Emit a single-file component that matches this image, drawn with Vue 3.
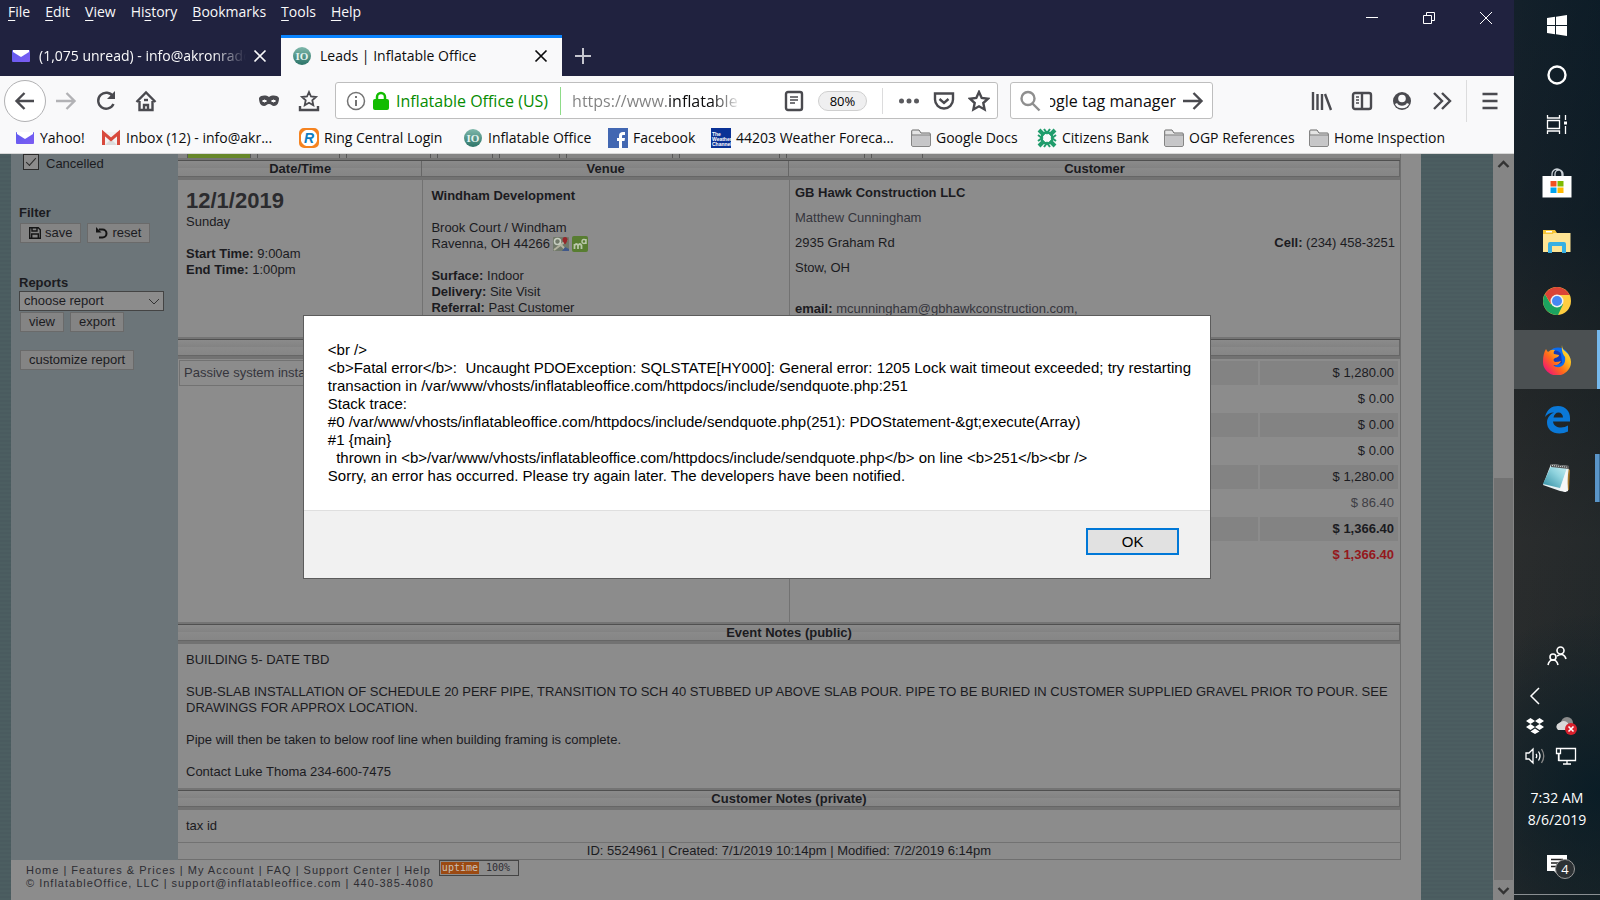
<script setup>
import { ref } from 'vue'

const menu = [
  ['', 'F', 'ile'],
  ['', 'E', 'dit'],
  ['', 'V', 'iew'],
  ['Hi', 's', 'tory'],
  ['', 'B', 'ookmarks'],
  ['', 'T', 'ools'],
  ['', 'H', 'elp'],
]

// badge = text logo, icon = symbol from the sprite
const bookmarks = [
  { icon: 'mail', label: 'Yahoo!' },
  { icon: 'gmail', label: 'Inbox (12) - info@akr...' },
  { badge: 'ring', text: 'R', label: 'Ring Central Login' },
  { badge: 'io', text: 'IO', label: 'Inflatable Office' },
  { icon: 'facebook', label: 'Facebook' },
  { badge: 'weather', text: 'The Weather Channel', label: '44203 Weather Foreca...' },
  { icon: 'folder', label: 'Google Docs' },
  { icon: 'citizens', label: 'Citizens Bank' },
  { icon: 'folder', label: 'OGP References' },
  { icon: 'folder', label: 'Home Inspection' },
]

const leadTabs = [64, 83, 85, 56, 61, 107, 101, 79, 52]

const totals = [
  { value: '$ 1,280.00' },
  { value: '$ 0.00' },
  { value: '$ 0.00' },
  { value: '$ 0.00' },
  { value: '$ 1,280.00' },
  { value: '$ 86.40', type: 'tax' },
  { value: '$ 1,366.40', type: 'total' },
  { value: '$ 1,366.40', type: 'due' },
]

const footerLinks = ['Home', 'Features & Prices', 'My Account', 'FAQ', 'Support Center', 'Help']

const errorText = `<br />
<b>Fatal error</b>:  Uncaught PDOException: SQLSTATE[HY000]: General error: 1205 Lock wait timeout exceeded; try restarting transaction in /var/www/vhosts/inflatableoffice.com/httpdocs/include/sendquote.php:251
Stack trace:
#0 /var/www/vhosts/inflatableoffice.com/httpdocs/include/sendquote.php(251): PDOStatement-&gt;execute(Array)
#1 {main}
  thrown in <b>/var/www/vhosts/inflatableoffice.com/httpdocs/include/sendquote.php</b> on line <b>251</b><br />
Sorry, an error has occurred. Please try again later. The developers have been notified.`

const url = ref('https://www.inflatable')
const search = ref('google tag manager')
const report = ref('choose report')
const cancelled = ref(true)
const dialogOpen = ref(true)
</script>

<template>
  <!-- shared icons -->
  <svg class="sprite" aria-hidden="true">
    <defs>
      <linearGradient id="gMail" x1="0" y1="0" x2="1" y2="1">
        <stop offset="0" stop-color="#5d5bf0" /><stop offset="1" stop-color="#7d5df2" />
      </linearGradient>
      <linearGradient id="gFox" x1="1" y1="0" x2="0.1" y2="0.9">
        <stop offset="0" stop-color="#fff14d" /><stop offset="0.35" stop-color="#ffbd1e" />
        <stop offset="0.65" stop-color="#ff6a1a" /><stop offset="1" stop-color="#f0107a" />
      </linearGradient>
      <linearGradient id="gPad" x1="0" y1="1" x2="1" y2="0">
        <stop offset="0" stop-color="#2e8ba0" /><stop offset="0.6" stop-color="#8fd3de" /><stop offset="1" stop-color="#c8eef2" />
      </linearGradient>
    </defs>
    <symbol id="mail" viewBox="0 0 20 20">
      <rect x="1" y="4" width="18" height="12" rx="1" fill="url(#gMail)" />
      <path d="M2 4h16v2l-8 5-8-5z" fill="#fff" />
    </symbol>
    <symbol id="gmail" viewBox="0 0 20 20">
      <path d="M1 4h18v13H1z" fill="#f2f2f2" />
      <path d="M4 17l6-6 6 6z" fill="#dcdcdc" />
      <path d="M2.500 17V5l7.500 6.500L17.500 5v12" fill="none" stroke="#d84a3d" stroke-width="3" />
    </symbol>
    <symbol id="facebook" viewBox="0 0 20 20">
      <rect width="20" height="20" fill="#4267b2" />
      <path d="M11 20v-7H9v-3h2V8c0-3 1.500-4 4-4h2v3h-1.500C14 7 14 7.500 14 8.500V10h3l-.5 3H14v7z" fill="#fff" />
    </symbol>
    <symbol id="folder" viewBox="0 0 20 20">
      <path d="M.7 17.300V3q0-1 1-1H8l2 3h8.300q1 0 1 1v11.300q0 1-1 1H1.700q-1 0-1-1z" fill="#e4e4e4" stroke="#6b6b6b" />
      <path d="M1.500 7.500h17v10h-17z" fill="#c6c6c8" /><path d="M1 7h18" stroke="#777" />
    </symbol>
    <symbol id="citizens" viewBox="0 0 20 20">
      <g stroke="#1f9c6b" fill="none">
        <path d="M2 2l5 5M18 2l-5 5M2 18l5-5M18 18l-5-5" stroke-width="4" />
        <path d="M7 1l3 4 3-4M7 19l3-4 3 4M1 7l4 3-4 3M19 7l-4 3 4 3" stroke-width="2" />
        <circle cx="10" cy="10" r="5.500" stroke-width="2.400" />
      </g>
    </symbol>
    <symbol id="close" viewBox="0 0 16 16">
      <path d="M2.500 2.500l11 11M13.500 2.500l-11 11" fill="none" stroke="currentColor" stroke-width="1.700" />
    </symbol>
  </svg>

  <div class="desktop">
    <div class="browser">
      <header class="titlebar">
        <nav class="menu">
          <button v-for="m in menu" :key="m.join('')">{{ m[0] }}<u>{{ m[1] }}</u>{{ m[2] }}</button>
        </nav>
        <div class="window-buttons">
          <button aria-label="Minimize"><svg width="14" height="14"><path d="M1 6.500h12" stroke="#fff" /></svg></button>
          <button aria-label="Restore"><svg width="14" height="14" fill="none" stroke="#fff"><path d="M1.500 4.500h8v8h-8zM4.500 4V1.500h8v8H10" /></svg></button>
          <button aria-label="Close"><svg width="14" height="14"><path d="M1 1l12 12M13 1L1 13" stroke="#fff" /></svg></button>
        </div>
      </header>

      <div class="tabs">
        <div class="tab">
          <svg class="favicon"><use href="#mail" /></svg>
          <span class="tab-title faded">(1,075 unread) - info@akronradon</span>
          <button aria-label="Close tab"><svg width="16" height="16"><use href="#close" /></svg></button>
        </div>
        <div class="tab active">
          <span class="favicon badge io">IO</span>
          <span class="tab-title">Leads | Inflatable Office</span>
          <button aria-label="Close tab"><svg width="16" height="16"><use href="#close" /></svg></button>
        </div>
        <button class="new-tab" aria-label="New tab"><svg width="18" height="18"><path d="M9 1v16M1 9h16" stroke="#c6c6cf" stroke-width="2" /></svg></button>
      </div>

      <div class="navbar">
        <button class="back" aria-label="Back">
          <svg width="22" height="22" viewBox="0 0 22 22"><path d="M20 11H3M10.500 3L2.500 11l8 8" /></svg>
        </button>
        <button class="tool dim" aria-label="Forward">
          <svg width="22" height="22" viewBox="0 0 22 22"><path d="M1 11h18M11.500 3l8 8-8 8" /></svg>
        </button>
        <button class="tool" aria-label="Reload">
          <svg width="22" height="22" viewBox="0 0 22 22"><path d="M18 6.500A8 8 0 1 0 18.500 14" /><path d="M20 1v8h-8z" fill="#4a4a4f" stroke="none" /></svg>
        </button>
        <button class="tool" aria-label="Home">
          <svg width="22" height="22" viewBox="0 0 22 22"><path d="M1.500 12L11 2.500l9.500 9.500M4.500 11v9h13v-9M9 20v-5h4v5" /><path d="M9 10h4" /></svg>
        </button>
        <span class="spacer"></span>
        <button class="tool" aria-label="Private browsing">
          <svg width="22" height="22" viewBox="0 0 22 22"><path d="M1 8c2-3 7-3 10-1 3-2 8-2 10 1 0 5-2 8-5 8-2 0-3-2-5-2s-3 2-5 2c-3 0-5-3-5-8z" fill="#4a4a4f" stroke="none" /><path d="M4.500 11q2-2 4 0-2 2-4 0zM13.500 11q2-2 4 0-2 2-4 0z" fill="#fff" stroke="#fff" stroke-width="1" /></svg>
        </button>
        <button class="tool" aria-label="Bookmarks tray">
          <svg width="22" height="22" viewBox="0 0 22 22"><path d="M11 2l2 4.500 5 .5-3.700 3.300 1 5L11 12.800l-4.300 2.500 1-5L4 7l5-.5z" stroke-width="1.800" /><path d="M2 16v4h18v-4" /></svg>
        </button>

        <div class="urlbar">
          <svg class="info" width="20" height="20" viewBox="0 0 20 20"><circle cx="10" cy="10" r="8.500" fill="none" stroke="#737373" stroke-width="1.500" /><path d="M10 5v2M10 9v6" stroke="#737373" stroke-width="2" /></svg>
          <svg class="lock" width="18" height="20" viewBox="0 0 18 20"><rect x="1" y="8" width="16" height="11" rx="2" fill="#12bc00" /><path d="M5 9V6a4 4 0 0 1 8 0v3" fill="none" stroke="#12bc00" stroke-width="2.500" /></svg>
          <span class="identity">Inflatable Office (US)</span>
          <input v-model="url" class="address" aria-label="Address">
          <button aria-label="Reader view"><svg width="22" height="22" viewBox="0 0 22 22"><rect x="3" y="2" width="16" height="18" rx="2" /><path d="M7 7h8M7 10h8M7 13h5" stroke-width="1.300" /></svg></button>
          <button class="zoom">80%</button>
          <span class="line"></span>
          <button aria-label="Page actions"><svg width="22" height="22" viewBox="0 0 22 22"><g fill="#5a5a5e" stroke="none"><circle cx="3.500" cy="11" r="2.500" /><circle cx="11" cy="11" r="2.500" /><circle cx="18.500" cy="11" r="2.500" /></g></svg></button>
          <button aria-label="Save to Pocket"><svg width="22" height="22" viewBox="0 0 22 22"><path d="M2 3.500h18v6a9 9 0 0 1-18 0z" /><path d="M6.500 9l4.500 4 4.500-4" stroke-width="2.400" /></svg></button>
          <button aria-label="Bookmark this page"><svg width="22" height="22" viewBox="0 0 22 22"><path d="M11 2l2.700 6 6.300.7-4.700 4.300 1.300 6.500L11 16.300l-5.600 3.200L6.700 13 2 8.700 8.300 8z" /></svg></button>
        </div>

        <div class="searchbar">
          <svg class="glass" width="22" height="22" viewBox="0 0 22 22"><circle cx="9" cy="8.500" r="6.500" /><path d="M13.500 13.500l7 7" /></svg>
          <input v-model="search" aria-label="Search">
          <button aria-label="Go"><svg width="22" height="22" viewBox="0 0 22 22"><path d="M1 11h18M11.500 3l8 8-8 8" /></svg></button>
        </div>
        <span class="spacer wide"></span>

        <button class="tool" aria-label="Library"><svg width="22" height="22" viewBox="0 0 22 22"><path d="M2 2v18M6.500 4v16M11 4v16M14 4l6 16" /></svg></button>
        <button class="tool" aria-label="Sidebars"><svg width="22" height="22" viewBox="0 0 22 22"><rect x="2" y="3" width="18" height="16" rx="2" /><path d="M11 3v16" /><path d="M5 7h3M5 10h3M5 13h3" stroke-width="1.300" /></svg></button>
        <button class="tool" aria-label="Account"><svg width="22" height="22" viewBox="0 0 22 22"><circle cx="11" cy="11" r="9" fill="#4a4a4f" stroke="none" /><circle cx="11" cy="8.500" r="3.800" fill="#f9f9fa" stroke="none" /><path d="M5 13.500q1.500 3.500 6 3.500t6-3.500" stroke="#f9f9fa" /></svg></button>
        <button class="tool" aria-label="More tools"><svg width="22" height="22" viewBox="0 0 22 22"><path d="M3 3l8 8-8 8M11 3l8 8-8 8" /></svg></button>
        <button class="tool hamburger" aria-label="Menu"><svg width="22" height="22" viewBox="0 0 22 22"><path d="M3.500 4h15M3.500 11h15M3.500 18h15" /></svg></button>
      </div>

      <nav class="bookmarks">
        <a v-for="b in bookmarks" :key="b.label" href="#">
          <svg v-if="b.icon" class="bm-icon"><use :href="'#' + b.icon" /></svg>
          <span v-else class="bm-icon badge" :class="b.badge">{{ b.text }}</span>
          {{ b.label }}
        </a>
      </nav>

      <main class="page">
        <div class="site">
          <div class="columns">
            <aside class="sidebar">
              <label class="check"><input v-model="cancelled" type="checkbox"><span>Cancelled</span></label>
              <section class="filter">
                <h3>Filter</h3>
                <div class="row">
                  <button class="btn">
                    <svg width="12" height="12" viewBox="0 0 12 12"><path d="M.7.7h8.600l2 2v8.600H.7zM3 1v3h5V1M2.700 11V7h6.600v4" fill="none" stroke="#151515" stroke-width="1.400" /></svg>
                    save
                  </button>
                  <button class="btn">
                    <svg width="12" height="12" viewBox="0 0 12 12"><path d="M3 10.500h3.500a4 4 0 0 0 0-8H3" fill="none" stroke="#151515" stroke-width="2" /><path d="M0 0v5.500h5.500z" fill="#151515" /></svg>
                    reset
                  </button>
                </div>
              </section>
              <section class="reports">
                <h3><label for="report">Reports</label></h3>
                <div class="select">
                  <select id="report" v-model="report"><option>choose report</option></select>
                  <svg width="12" height="8"><path d="M1 1l5 5 5-5" fill="none" stroke="#333" /></svg>
                </div>
                <div class="row">
                  <button class="btn">view</button>
                  <button class="btn">export</button>
                </div>
                <button class="btn customize">customize report</button>
              </section>
            </aside>

            <article class="lead">
              <div class="lead-tabs">
                <i v-for="(w, i) in leadTabs" :key="i" :class="{ current: i === 0 }" :style="{ width: w + 'px' }"></i>
              </div>
              <div class="grid3 bars">
                <h2>Date/Time</h2>
                <h2>Venue</h2>
                <h2>Customer</h2>
              </div>
              <div class="grid3 details">
                <div class="cell">
                  <strong class="date">12/1/2019</strong>
                  <p>Sunday</p>
                  <p class="gap"><b>Start Time:</b> 9:00am</p>
                  <p><b>End Time:</b> 1:00pm</p>
                </div>
                <div class="cell">
                  <p><b>Windham Development</b></p>
                  <p class="gap">Brook Court / Windham</p>
                  <p class="city">Ravenna, OH 44266
                    <svg width="16" height="14" viewBox="0 0 16 14"><rect width="16" height="14" rx="1" fill="#71796a" /><path d="M1 13L14 3M6 6l8 8" stroke="#b3b3a0" stroke-width="2" /><path d="M9 14l3-4 4 2v2z" fill="#40588a" /><circle cx="4.500" cy="4.500" r="3" fill="none" stroke="#c5cdc0" stroke-width="1.500" /><path d="M9.500 2.500a2.500 2.500 0 0 1 5 0c0 2-2.500 5-2.500 5S9.500 4.500 9.500 2.500z" fill="#96262a" /></svg>
                    <svg width="16" height="16" viewBox="0 0 16 16"><rect width="16" height="16" rx="2" fill="#587d31" /><path d="M2.500 13V8M2.500 9.500q2-3 3.500 0V13M6 9.500q2-3 3.500 0V13" fill="none" stroke="#b9c6aa" stroke-width="1.800" /><path d="M14 3v5M14 5.500a2 2 0 1 1 0-.1" fill="none" stroke="#b9c6aa" stroke-width="1.500" /></svg>
                  </p>
                  <p class="gap"><b>Surface:</b> Indoor</p>
                  <p><b>Delivery:</b> Site Visit</p>
                  <p><b>Referral:</b> Past Customer</p>
                </div>
                <div class="cell customer">
                  <p><b>GB Hawk Construction LLC</b></p>
                  <p><a href="#">Matthew Cunningham</a></p>
                  <p class="split"><span>2935 Graham Rd</span><span><b>Cell:</b> (234) 458-3251</span></p>
                  <p>Stow, OH</p>
                  <p class="gap"><b>email:</b> <a href="#">mcunningham@gbhawkconstruction.com,</a></p>
                </div>
              </div>

              <div class="bars"><h2></h2></div>
              <div class="items">
                <div class="cell-items"><div class="item-name">Passive system installation</div></div>
                <div class="cell-totals">
                  <table>
                    <tbody>
                      <tr v-for="(t, i) in totals" :key="i" :class="t.type">
                        <td></td>
                        <td>{{ t.value }}</td>
                      </tr>
                    </tbody>
                  </table>
                </div>
              </div>

              <div class="bars"><h2>Event Notes (public)</h2></div>
              <div class="notes">
                <p>BUILDING 5- DATE TBD</p>
                <p>SUB-SLAB INSTALLATION OF SCHEDULE 20 PERF PIPE, TRANSITION TO SCH 40 STUBBED UP ABOVE SLAB POUR. PIPE TO BE BURIED IN CUSTOMER SUPPLIED GRAVEL PRIOR TO POUR. SEE DRAWINGS FOR APPROX LOCATION.</p>
                <p>Pipe will then be taken to below roof line when building framing is complete.</p>
                <p>Contact Luke Thoma 234-600-7475</p>
              </div>

              <div class="bars"><h2>Customer Notes (private)</h2></div>
              <div class="private">tax id</div>
              <div class="meta">ID: 5524961 | Created: 7/1/2019 10:14pm | Modified: 7/2/2019 6:14pm</div>
            </article>
          </div>

          <footer class="footer">
            <div>
              <p><template v-for="(l, i) in footerLinks" :key="l"><template v-if="i"> | </template><a href="#">{{ l }}</a></template></p>
              <p>© InflatableOffice, LLC | <a href="#">support@inflatableoffice.com</a> | 440-385-4080</p>
            </div>
            <div class="uptime"><span>uptime</span><b>100%</b></div>
          </footer>
        </div>

        <div class="scrollbar">
          <svg width="20" height="20"><path d="M5.500 13l5-5 5 5" /></svg>
          <div class="track"><div class="thumb"></div></div>
          <svg width="20" height="20"><path d="M5.500 8l5 5 5-5" /></svg>
        </div>

        <div v-if="dialogOpen" class="overlay">
          <div class="dialog" role="alertdialog" aria-modal="true">
            <p>{{ errorText }}</p>
            <div class="dialog-footer"><button @click="dialogOpen = false">OK</button></div>
          </div>
        </div>
      </main>
    </div>

    <aside class="taskbar">
      <button class="sys" aria-label="Start"><svg width="24" height="24" viewBox="0 0 24 24"><path d="M2 5l8-1.200V12H2zM11 3.700L22 2v10H11zM2 13h8v8.200L2 20zM11 13h11v10l-11-1.700z" fill="#fff" /></svg></button>
      <button class="sys" aria-label="Cortana"><svg width="24" height="24" viewBox="0 0 24 24"><circle cx="12" cy="12" r="8.500" fill="none" stroke="#fff" stroke-width="2.400" /></svg></button>
      <button class="sys" aria-label="Task view"><svg width="24" height="24" viewBox="0 0 24 24" fill="none" stroke="#fff" stroke-width="1.300"><path d="M2.500 7.500h12v8h-12zM2.500 2v3h12V2M2.500 21v-3h12v3M20.500 2v5M20.500 13v8" /><path d="M19 8.500h3v3h-3z" fill="#fff" stroke="none" /></svg></button>

      <button class="app" aria-label="Store"><svg width="30" height="30" viewBox="0 0 30 30"><path d="M10 9V6a5 5 0 0 1 10 0v3M13 9V6a4 4 0 0 1 8 0v3" fill="none" stroke="#c9d0d6" stroke-width="1.300" /><path d="M.5 8h29v21.500H.5z" fill="#fff" /><path d="M8.500 13h6v5.500h-6z" fill="#f25022" /><path d="M15.500 13h6v5.500h-6z" fill="#7fba00" /><path d="M8.500 19.500h6V25h-6z" fill="#00a4ef" /><path d="M15.500 19.500h6V25h-6z" fill="#ffb900" /></svg></button>
      <button class="app" aria-label="File Explorer"><svg width="30" height="30" viewBox="0 0 30 30"><path d="M1 3h12l2 3h-3v3H1z" fill="#f7c536" /><path d="M1 6h27.500v19H1z" fill="#ffe594" /><path d="M1 3h11l2 2h-2l-1 2H1z" fill="#f7c536" /><path d="M4 4h6v1.500H4z" fill="#fff" /><path d="M6 26v-9q0-2 2-2h14q2 0 2 2v9h-4v-7H10v7z" fill="#38b0e3" /></svg></button>
      <button class="app" aria-label="Chrome"><svg width="30" height="30" viewBox="0 0 30 30"><circle cx="15" cy="15" r="14" fill="#ffcd40" /><path d="M15 15L15 29A14 14 0 0 1 2.900 8L8.900 18.500z" fill="#1ba260" /><path d="M15 29A14 14 0 0 0 16 29L21 18.500 15 15z" fill="#1ba260" /><path d="M2.900 8A14 14 0 0 1 27.100 8L27.500 9H15L9 18z" fill="#db4437" /><circle cx="15" cy="15" r="6.500" fill="#f1f1f1" /><circle cx="15" cy="15" r="5" fill="#4687f4" /></svg></button>
      <button class="app active" aria-label="Firefox"><svg width="30" height="30" viewBox="0 0 30 30"><circle cx="16" cy="14" r="11.500" fill="#0a6cf0" /><path d="M10 6q6-2 9 3l1 9-8 3z" fill="#173bb5" /><path d="M20 0q0 4 3 6 6 5 6 11a14 13.500 0 0 1-28 0C1 11 2 7 4 4q1 2 2 3 3-3 7-2-2 2-1 4l5 1q0 2-4 3-3 2 0 4 4 0 6-1-2 5-8 4 4 4 9 1 4-3 3-9-4-5-3-12z" fill="url(#gFox)" /></svg></button>
      <button class="app" aria-label="Edge"><svg width="30" height="30" viewBox="0 0 30 30"><path d="M3 13C5 5 10 2 16 2c8 0 12 6 12 12v3.500H11c.5 4 4 6 8 6q4 0 7-2v6q-4 2-8.500 2C10 29.500 5 25 5 18.500 5 14 8 10 12 8.500 8 8.500 5 10.500 3 13zm8.500.5H21c0-3-2-5-4.500-5s-4.500 2-5 5z" fill="#0a78d7" /></svg></button>
      <button class="app running" aria-label="Notepad"><svg width="30" height="30" viewBox="0 0 30 30"><path d="M25 5l3 2-1 20-4 1z" fill="#a5762c" /><path d="M9 1l18 2-3 26-6-1L1 22z" fill="#e8f1f3" /><path d="M9 3l16 2-7 20-17-4z" fill="url(#gPad)" /><path d="M25 5l1 23-3 1-5-2z" fill="#f7f7f7" /><path d="M9 1l18 2v3L9 4z" fill="#555" /><path d="M10 2.500l16 1.800" stroke="#ddd" stroke-dasharray="1 1" /></svg></button>

      <div class="tray">
        <button class="people" aria-label="People"><svg width="20" height="20" viewBox="0 0 20 20" fill="none" stroke="#fff" stroke-width="1.600"><circle cx="13.500" cy="4.500" r="3.500" /><path d="M10 10q7-4 9 3" /><circle cx="6" cy="11" r="3" /><path d="M1 19q1-5 5-5t5 5" /></svg></button>
        <div class="tray-icons">
          <svg width="20" height="20" viewBox="0 0 20 20"><path d="M14 2l-8 8 8 8" fill="none" stroke="#fff" stroke-width="1.500" /></svg>
          <span></span>
          <svg width="20" height="20" viewBox="0 0 20 20"><path d="M5.500 2l4.500 3-4.500 3L1 5zM14.500 2L19 5l-4.500 3L10 5zM5.500 8l4.500 3-4.500 3L1 11zM14.500 8l4.500 3-4.500 3-4.500-3zM10 12.500l4.500 3L10 18l-4.500-2.500z" fill="#fff" /></svg>
          <svg width="22" height="20" viewBox="0 0 22 20"><circle cx="12" cy="7" r="6" fill="#8b8b8b" /><path d="M3 14a4 4 0 0 1 1-7q5-4 9 0v7z" fill="#d9d9d9" /><circle cx="16" cy="13" r="6" fill="#d8202c" /><path d="M13.500 10.500l5 5M18.500 10.500l-5 5" stroke="#fff" stroke-width="1.600" /></svg>
          <svg width="20" height="20" viewBox="0 0 20 20" fill="none" stroke="#fff" stroke-width="1.300"><path d="M1 7h3l4-4v14l-4-4H1zM11 8q1.500 2 0 4M13.500 5.500q3 4.500 0 9" /><path d="M16.500 3q4.500 7 0 14" stroke="#888" /></svg>
          <svg width="22" height="20" viewBox="0 0 22 20" fill="none" stroke="#fff" stroke-width="1.300"><path d="M5 2.500h15.500v12H4V8M12 15v3M8 18h8M1.500 2.500h4v5h-4zM3.500 8v7" /></svg>
        </div>
        <div class="clock"><span>7:32 AM</span><span>8/6/2019</span></div>
        <button class="notify" aria-label="Notifications">
          <svg width="22" height="22" viewBox="0 0 22 22"><path d="M1 1h20v16h-9v4l-4-4H1z" fill="#fff" /><path d="M5 5.500h12M5 9h12M5 12.500h8" stroke="#222" stroke-width="1.300" /></svg>
          <span class="count">4</span>
        </button>
      </div>
    </aside>
  </div>
</template>

<style>
body {
  margin: 0;
  overflow: hidden;
}
</style>

<style scoped>
.sprite {
  position: absolute;
  width: 0;
  height: 0;
}

.desktop {
  display: grid;
  grid-template-columns: minmax(0, 1fr) 86px;
  height: 100vh;
  font-family: "Open Sans", "Noto Sans", sans-serif;
}

button {
  padding: 0;
  border: 0;
  background: none;
  font: inherit;
  color: inherit;
}

svg {
  display: block;
  flex: none;
}

p, h2, h3 {
  margin: 0;
}

a {
  color: inherit;
  text-decoration: none;
}

.browser {
  display: flex;
  flex-direction: column;
  min-height: 0;
}

/* title bar and tabs */
.titlebar {
  display: flex;
  justify-content: space-between;
  height: 35px;
  background: #20223f;
  color: #f9f9fa;
}

.menu {
  display: flex;
  gap: 15px;
  padding-left: 8px;
  font-size: 14px;
  line-height: 24px;
  height: 24px;
}

.menu u {
  text-underline-offset: 3px;
}

.window-buttons {
  display: flex;
}

.window-buttons button {
  display: grid;
  place-items: center;
  width: 57px;
}

.tabs {
  display: flex;
  height: 41px;
  background: #20223f;
  color: #f9f9fa;
}

.tab {
  box-sizing: border-box;
  display: flex;
  align-items: center;
  width: 281px;
  padding: 0 13px 0 11px;
  font-size: 14px;
}

.tab.active {
  padding-bottom: 3px;
  border-top: 3px solid #0a84ff;
  background: #f9f9fa;
  color: #0c0c0d;
}

.favicon {
  width: 20px;
  height: 20px;
  margin-right: 8px;
}

.tab-title {
  flex: 1;
  overflow: hidden;
  white-space: nowrap;
  margin-right: 6px;
}

.tab-title.faded {
  -webkit-mask-image: linear-gradient(90deg, #000 84%, transparent);
  mask-image: linear-gradient(90deg, #000 84%, transparent);
}

.new-tab {
  width: 42px;
  display: grid;
  place-items: center;
}

/* text logos */
.badge {
  box-sizing: border-box;
  display: block;
  flex: none;
  text-align: center;
  white-space: normal;
}

.badge.io {
  border: 1px solid transparent;
  border-radius: 50%;
  background: linear-gradient(#7fb8ab, #2c7468) padding-box;
  color: #e4f3ef;
  font: bold 11px/18px "Liberation Serif", serif;
}

.badge.ring {
  border: 2px solid #f58320;
  border-radius: 5px;
  background: radial-gradient(circle, #fff 8px, #f58320 9px);
  color: #0d7dc1;
  font: italic bold 14px/16px "Liberation Sans", sans-serif;
}

.badge.weather {
  padding: 4px 0 0 1px;
  background: #0b3296;
  color: #fff;
  font: bold 5px/5px "Liberation Sans", sans-serif;
  text-align: left;
}

/* navigation */
.navbar {
  display: flex;
  align-items: center;
  height: 49px;
  padding: 0 4px;
  background: #f9f9fa;
}

.navbar svg {
  fill: none;
  stroke: #4a4a4f;
  stroke-width: 2.4;
}

.back {
  display: grid;
  place-items: center;
  width: 42px;
  height: 42px;
  border: 1px solid #b1b1b3;
  border-radius: 50%;
  background: #fff;
}

.tool {
  display: grid;
  place-items: center;
  width: 40px;
  height: 40px;
}

.tool.dim {
  opacity: 0.4;
}

.spacer {
  width: 83px;
}

.spacer.wide {
  width: 89px;
}

.hamburger {
  position: relative;
  margin-left: 8px;
}

.hamburger::before {
  content: "";
  position: absolute;
  left: -4px;
  top: -1px;
  height: 42px;
  border-left: 1px solid #dcdcdd;
}

.urlbar,
.searchbar {
  box-sizing: border-box;
  display: flex;
  align-items: center;
  height: 37px;
  border: 1px solid #bebebe;
  border-radius: 3px;
  background: #fff;
}

.urlbar {
  flex: 1;
  min-width: 0;
  margin: 0 12px 0 6px;
  padding: 0 1px 0 10px;
}

.urlbar > button:not(.zoom) {
  display: grid;
  place-items: center;
  width: 35px;
}

.navbar svg.info,
.navbar svg.lock {
  stroke: none;
}

.info {
  margin-right: 6px;
}

.identity {
  margin-left: 6px;
  padding-right: 12px;
  border-right: 1px solid #8edc88;
  font-size: 16px;
  line-height: 28px;
  color: #058b00;
  white-space: nowrap;
}

.address,
.searchbar input {
  min-width: 0;
  padding: 0;
  border: 0;
  outline: 0;
  background: none;
  font: 16px/28px "Open Sans", "Noto Sans", sans-serif;
}

.address {
  flex: 0 1 168px;
  margin: 0 auto 0 11px;
  background: linear-gradient(90deg, #808080 96px, #0c0c0d 96px, #0c0c0d 140px, transparent 168px);
  -webkit-background-clip: text;
  background-clip: text;
  color: transparent;
}

.zoom {
  width: 49px;
  height: 20px;
  margin: 0 15px 0 7px;
  border: 1px solid #cfcfcf;
  border-radius: 10px;
  background: #efeff0;
  font-size: 13px;
  line-height: 18px;
}

.line {
  height: 26px;
  margin-right: 8px;
  border-left: 1px solid #dcdcdd;
}

.searchbar {
  width: 203px;
  padding: 0 8px;
}

.navbar svg.glass {
  stroke: #8f8f8f;
}

.searchbar input {
  flex: 1;
  margin: 0 6px 0 9px;
  color: #0c0c0d;
  direction: rtl;
}

.bookmarks {
  display: grid;
  grid-template-columns: 86px 198px 164px 145px 103px 200px 126px 127px 145px auto;
  height: 28px;
  padding-left: 15px;
  border-bottom: 1px solid #d8d8d8;
  background: #f9f9fa;
  font-size: 14px;
  line-height: 26px;
}

.bookmarks a {
  display: flex;
  align-items: center;
  gap: 5px;
  height: 26px;
  white-space: nowrap;
  color: #0c0c0d;
}

.bm-icon {
  width: 20px;
  height: 20px;
}

/* web page */
.page {
  position: relative;
  display: flex;
  flex: 1;
  min-height: 0;
  overflow: hidden;
  background: repeating-linear-gradient(#4c5e61 0 2px, #4a5b5f 2px 4px);
  font: 13px/16px "Liberation Sans", Arial, sans-serif;
  color: #1b1b1f;
}

.site {
  flex: 1;
  display: flex;
  flex-direction: column;
  margin: 0 72px 0 11px;
  background: #8c8c8c;
}

.columns {
  display: grid;
  grid-template-columns: 167px minmax(0, 1fr);
}

.sidebar {
  padding: 0 8px;
  background: #6c7579;
}

.check {
  display: flex;
  align-items: flex-end;
  gap: 7px;
  height: 18px;
  padding-left: 4px;
}

.check input {
  appearance: none;
  flex: none;
  box-sizing: border-box;
  width: 16px;
  height: 16px;
  margin: 0 0 2px;
  border: 1px solid #2b2b2b;
  background: #8c8c8c;
  display: grid;
  place-items: center;
}

.check input:checked::before {
  content: "";
  width: 9px;
  height: 4px;
  margin-top: -4px;
  border: solid #2b2b2b;
  border-width: 0 0 1px 1px;
  transform: rotate(-48deg);
}

.sidebar h3 {
  font-size: 13px;
  line-height: 20px;
}

.filter {
  margin-top: 31px;
}

.reports {
  margin-top: 32px;
}

.reports h3 {
  line-height: 16px;
}

.row {
  display: flex;
  gap: 6px;
  padding-left: 1px;
}

.btn {
  display: inline-flex;
  align-items: center;
  gap: 4px;
  height: 20px;
  padding: 0 8px;
  border: 1px solid #6a6a6a;
  background: #848484;
  line-height: 18px;
}

.select {
  position: relative;
  width: 145px;
  margin-bottom: 1px;
}

.select select {
  appearance: none;
  width: 100%;
  height: 20px;
  padding: 0 4px;
  border: 1px solid #444;
  border-radius: 0;
  background: #8c8c8c;
  font: inherit;
  color: #1b1b1f;
}

.select svg {
  position: absolute;
  right: 4px;
  top: 7px;
}

.customize {
  margin: 18px 0 0 1px;
}

.lead {
  margin-right: 20px;
  border-right: 1px solid #6f6f6f;
  border-bottom: 1px solid #6f6f6f;
}

.lead-tabs {
  display: flex;
  gap: 6px;
  height: 4px;
  padding-left: 9px;
  background: #858585;
}

.lead-tabs i {
  box-sizing: border-box;
  border: solid #585858;
  border-width: 0 1px;
}

.lead-tabs .current {
  background: #67872a;
}

.bars h2 {
  box-sizing: border-box;
  height: 22px;
  border-top: 2px solid #747474;
  border-bottom: 3px solid #727272;
  background: linear-gradient(#8c8c8c, #838383 45%, #8a8a8a 50%, #858585);
  box-shadow: inset 0 1px #505050, inset 0 -1px #666, inset -1px 0 #666;
  font-size: 13px;
  line-height: 18px;
  text-align: center;
}

.grid3 {
  display: grid;
  grid-template-columns: 20% 30% 50%;
}

.details {
  height: 157px;
}

.cell {
  padding: 8px;
  border-left: 1px solid #727272;
}

.cell:first-child {
  border-left: 0;
}

.gap {
  margin-top: 16px;
}

.date {
  display: block;
  font-size: 22px;
  line-height: 26px;
  color: #2b2b2e;
}

.city {
  display: flex;
  align-items: center;
  gap: 3px;
}

.customer {
  padding: 0 5px;
  line-height: 25px;
}

.customer a {
  color: #35353c;
}

.split {
  display: flex;
  justify-content: space-between;
}

.items {
  display: grid;
  grid-template-columns: 50% 50%;
  height: 263px;
}

.cell-items {
  padding: 1px;
}

.item-name {
  box-sizing: border-box;
  height: 26px;
  padding: 0 4px;
  border: 1px solid #727272;
  line-height: 24px;
  color: #35353c;
}

.cell-totals {
  border-left: 1px solid #727272;
}

.cell-totals table {
  width: 100%;
  border-spacing: 2px;
}

.cell-totals td {
  height: 24px;
  padding: 0 4px;
  text-align: right;
}

.cell-totals td:last-child {
  width: 130px;
}

.cell-totals tr:nth-child(odd) td {
  background: #838383;
}

.tax {
  color: #3e3e44;
}

.total {
  font-weight: bold;
}

.due {
  font-weight: bold;
  color: #94181c;
}

.notes {
  display: flex;
  flex-direction: column;
  gap: 16px;
  padding: 8px;
}

.private {
  padding: 8px;
}

.meta {
  border-top: 1px solid #727272;
  text-align: center;
}

.footer {
  display: flex;
  gap: 5px;
  padding-left: 15px;
  font-size: 11px;
  line-height: 13px;
  letter-spacing: 1px;
  color: #2d2d33;
}

.footer > div:first-child {
  padding-top: 4px;
}

.uptime {
  box-sizing: border-box;
  display: flex;
  width: 80px;
  height: 16px;
  padding: 1px;
  border: 1px solid #444;
  font: 10px/12px "DejaVu Sans Mono", monospace;
  letter-spacing: normal;
}

.uptime span {
  width: 38px;
  background: #9c4a12;
  color: #c9c0b8;
  text-align: center;
}

.uptime b {
  flex: 1;
  font-weight: normal;
  text-align: center;
}

.scrollbar {
  display: flex;
  flex-direction: column;
  width: 21px;
  background: #858585;
}

.scrollbar path {
  fill: none;
  stroke: #333;
  stroke-width: 2.4;
}

.track {
  display: flex;
  flex: 1;
  align-items: flex-end;
  padding: 0 1px;
}

.thumb {
  flex: 1;
  height: 57%;
  background: #727272;
}

/* error dialog */
.overlay {
  position: absolute;
  inset: 0;
  display: flex;
  align-items: flex-start;
  justify-content: center;
}

.dialog {
  box-sizing: border-box;
  width: 60%;
  margin-top: 161px;
  border: 1px solid #5c5c5c;
  background: #fff;
  color: #000;
}

.dialog p {
  padding: 25px 12px 25px 24px;
  font-size: 15px;
  line-height: 18px;
  white-space: pre-wrap;
}

.dialog-footer {
  display: flex;
  justify-content: flex-end;
  padding: 17px 31px 23px;
  border-top: 1px solid #dfdfdf;
  background: #f1f1f1;
}

.dialog-footer button {
  box-sizing: border-box;
  width: 93px;
  height: 27px;
  border: 2px solid #0078d7;
  background: #e1e1e1;
  font-size: 15px;
}

/* taskbar */
.taskbar {
  display: flex;
  flex-direction: column;
  background:
    radial-gradient(circle at 100% 88%, rgba(8, 28, 38, 0.9), rgba(8, 28, 38, 0) 180px),
    linear-gradient(100deg, rgba(60, 56, 52, 0.3), rgba(0, 20, 25, 0.3)),
    linear-gradient(#021626, #0a1925 25%, #1d2225 40%, #2d2e2f 60%, #2b2c2d);
  color: #fff;
}

.sys {
  display: grid;
  place-items: center;
  height: 50px;
}

.app {
  display: grid;
  place-items: center;
  height: 59px;
}

.sys + .app {
  margin-top: 3px;
}

.app.active {
  border-right: 3px solid #76b9ed;
  padding-left: 3px;
  background: #4b5052;
}

.app.running {
  background: linear-gradient(90deg, #5a95c8 4px, #3a6d98 4px) no-repeat right center / 5px 48px;
}

.tray {
  display: flex;
  flex-direction: column;
  align-items: center;
  margin-top: auto;
  padding-bottom: 13px;
  border-bottom: 1px solid #8a8f92;
  margin-bottom: 5px;
}

.people {
  margin-bottom: 20px;
}

.tray-icons {
  display: grid;
  grid-template-columns: 20px 22px;
  gap: 10px;
  margin: 0 13px 21px 0;
}

.clock {
  display: flex;
  flex-direction: column;
  align-items: center;
  margin-bottom: 17px;
  font-size: 14px;
  line-height: 22px;
}

.notify {
  position: relative;
  height: 33px;
}

.count {
  position: absolute;
  left: 9px;
  top: 11px;
  box-sizing: border-box;
  width: 20px;
  height: 20px;
  border: 1px solid #9a9a9a;
  border-radius: 50%;
  background: #2c3134;
  font-size: 13px;
  line-height: 18px;
}
</style>
